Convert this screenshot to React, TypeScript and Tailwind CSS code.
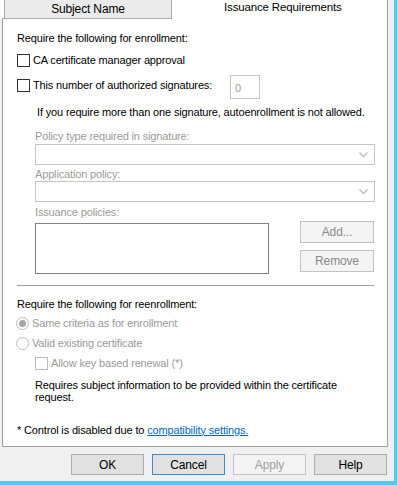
import React from 'react';

const font = { fontFamily: '"Liberation Sans", Arial, sans-serif' };

function CheckBox({ disabled }: { disabled?: boolean }) {
  return (
    <div
      className={`w-[13px] h-[13px] bg-white border shrink-0 ${
        disabled ? 'border-[#bcbcbc]' : 'border-[#333333]'
      }`}
    />
  );
}

function Radio({ checked }: { checked?: boolean }) {
  return (
    <svg width="13" height="13" viewBox="0 0 13 13" className="shrink-0">
      <circle cx="6.5" cy="6.5" r="6" fill="#ffffff" stroke="#bcbcbc" strokeWidth="1" />
      {checked && <circle cx="6.5" cy="6.5" r="3.5" fill="#a8a8a8" />}
    </svg>
  );
}

function Combo() {
  return (
    <div className="h-[21px] w-[340px] border border-[#c5c5c5] bg-white flex items-center justify-end pr-[6px]">
      <svg width="9" height="6" viewBox="0 0 9 6">
        <polyline points="0.5,0.5 4.5,4.5 8.5,0.5" fill="none" stroke="#bdbdbd" strokeWidth="1.3" />
      </svg>
    </div>
  );
}

function DialogButton({ label, variant }: { label: string; variant?: 'default' | 'disabled' }) {
  const cls =
    variant === 'disabled'
      ? 'bg-[#f4f4f4] border-[#c3c3c3] text-[#a0a0a0]'
      : variant === 'default'
      ? 'bg-[#e1e1e1] border-[#3c8ad0] text-black'
      : 'bg-[#e1e1e1] border-[#adadad] text-black';
  return (
    <div className={`w-[73px] h-[21px] border flex items-center justify-center text-[12px] ${cls}`}>
      {label}
    </div>
  );
}

export default function App() {
  return (
    <div
      style={font}
      className="w-[397px] h-[485px] bg-[#f0f0f0] border-r-[3px] border-b-[4px] border-[#5bc4ee] text-[11px] text-black tracking-[-0.15px] overflow-hidden"
    >
      {/* Tabs */}
      <div className="flex w-[388px] h-[19px] bg-white">
        <div className="w-[2px]" />
        <div className="w-[2px] border-b border-[#a0a0a0]" />
        <div className="w-[168px] border border-t-0 border-[#acacac] bg-[#ebebeb] flex items-center justify-center text-[12px] pb-[1px]">
          Subject Name
        </div>
        <div className="flex-1 border-r border-[#a0a0a0] pl-[52px] text-[11.5px] leading-[14px]">
          Issuance Requirements
        </div>
      </div>

      {/* Tab page */}
      <div className="ml-[2px] w-[386px] h-[428px] bg-white border-x border-b border-[#a0a0a0] pl-[14px] flex flex-col">
        <div className="mt-[12px] h-[14px] flex items-center">Require the following for enrollment:</div>

        <div className="mt-[8px] h-[14px] flex items-center gap-[3px]">
          <CheckBox />
          <span>CA certificate manager approval</span>
        </div>

        <div className="mt-[8px] h-[24px] flex items-start">
          <div className="mt-[2px] w-[213px] flex items-center gap-[3px]">
            <CheckBox />
            <span>This number of authorized signatures:</span>
          </div>
          <div className="w-[30px] h-[24px] border border-[#c5c5c5] pl-[4px] pt-[4px] text-[#9a9a9a]">0</div>
        </div>

        <div className="mt-[6px] h-[14px] pl-[20px] flex items-center">
          If you require more than one signature, autoenrollment is not allowed.
        </div>

        <div className="pl-[18px] text-[#9a9a9a] flex flex-col">
          <div className="mt-[10px] h-[14px] flex items-center">Policy type required in signature:</div>
          <div className="mt-[1px]">
            <Combo />
          </div>
          <div className="mt-[2px] h-[14px] flex items-center">Application policy:</div>
          <div>
            <Combo />
          </div>
          <div className="mt-[3px] h-[14px] flex items-center">Issuance policies:</div>
          <div className="mt-[2px] flex">
            <div className="mt-[2px] w-[234px] h-[51px] border border-[#828282] bg-white" />
            <div className="ml-[31px] flex flex-col gap-[7px]">
              <div className="w-[74px] h-[22px] border border-[#c3c3c3] bg-[#f4f4f4] flex items-center justify-center text-[#8a8a8a] text-[12px]">
                Add...
              </div>
              <div className="w-[74px] h-[22px] border border-[#c3c3c3] bg-[#f4f4f4] flex items-center justify-center text-[#8a8a8a] text-[12px]">
                Remove
              </div>
            </div>
          </div>
        </div>

        <div className="mt-[11px] w-[357px] h-px bg-[#a0a0a0]" />

        <div className="mt-[11px] h-[14px] flex items-center">Require the following for reenrollment:</div>

        <div className="mt-[5px] h-[14px] flex items-center gap-[3px] text-[#9a9a9a] -ml-[1px]">
          <Radio checked />
          <span>Same criteria as for enrollment</span>
        </div>
        <div className="mt-[6px] h-[14px] flex items-center gap-[3px] text-[#9a9a9a] -ml-[1px]">
          <Radio />
          <span>Valid existing certificate</span>
        </div>
        <div className="mt-[6px] h-[14px] pl-[18px] flex items-center gap-[3px] text-[#9a9a9a]">
          <CheckBox disabled />
          <span>Allow key based renewal (*)</span>
        </div>

        <div className="mt-[9px] pl-[18px] leading-[12px] w-[330px]">
          Requires subject information to be provided within the certificate request.
        </div>

        <div className="mt-[20px] h-[14px] flex items-center">
          <span>* Control is disabled due to&nbsp;</span>
          <span className="text-[#0066cc] underline">compatibility settings.</span>
        </div>
      </div>

      {/* Buttons */}
      <div className="mt-[7px] pr-[7px] flex justify-end gap-[8px]">
        <DialogButton label="OK" />
        <DialogButton label="Cancel" variant="default" />
        <DialogButton label="Apply" variant="disabled" />
        <DialogButton label="Help" />
      </div>
    </div>
  );
}
